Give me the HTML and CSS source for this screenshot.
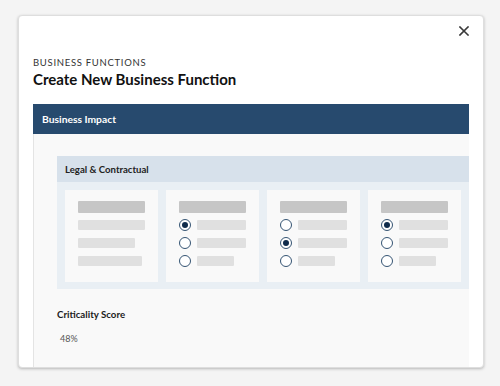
FILE: index.html
```html
<!DOCTYPE html>
<html lang="en">
<head>
<meta charset="utf-8">
<title>Create New Business Function</title>
<link rel="stylesheet" href="styles.css">
</head>
<body>
<div class="modal">
  <button class="close" aria-label="Close">
    <svg width="10" height="10" viewBox="0 0 10 10"><path d="M1 1 L9 9 M9 1 L1 9" stroke="#3a3a3a" stroke-width="1.6" stroke-linecap="square"/></svg>
  </button>
  <div class="eyebrow">BUSINESS FUNCTIONS</div>
  <h1 class="title">Create New Business Function</h1>
  <div class="bar">Business Impact</div>
  <div class="panel">
    <div class="section">
      <div class="section-head">Legal &amp; Contractual</div>
      <div class="section-body">
        <div class="opt-card">
          <div class="ph-head"></div>
          <div class="row"><span class="ph-line w67"></span></div>
          <div class="row"><span class="ph-line w57"></span></div>
          <div class="row"><span class="ph-line w64"></span></div>
        </div>
        <div class="opt-card">
          <div class="ph-head"></div>
          <div class="row"><span class="radio on"></span><span class="ph-line w50"></span></div>
          <div class="row"><span class="radio"></span><span class="ph-line w50"></span></div>
          <div class="row"><span class="radio"></span><span class="ph-line w37"></span></div>
        </div>
        <div class="opt-card">
          <div class="ph-head"></div>
          <div class="row"><span class="radio"></span><span class="ph-line w50"></span></div>
          <div class="row"><span class="radio on"></span><span class="ph-line w50"></span></div>
          <div class="row"><span class="radio"></span><span class="ph-line w37"></span></div>
        </div>
        <div class="opt-card">
          <div class="ph-head"></div>
          <div class="row"><span class="radio on"></span><span class="ph-line w50"></span></div>
          <div class="row"><span class="radio"></span><span class="ph-line w50"></span></div>
          <div class="row"><span class="radio"></span><span class="ph-line w37"></span></div>
        </div>
      </div>
    </div>
    <div class="score-label">Criticality Score</div>
    <div class="score-value">48%</div>
  </div>
</div>
</body>
</html>
```
FILE: styles.css
```css
* { box-sizing: border-box; }
html, body { margin: 0; padding: 0; }
body {
  width: 500px;
  height: 386px;
  background: #f4f4f4;
  font-family: Lato, "Open Sans", sans-serif;
  color: #1b1b1b;
  padding: 15px 0 0 18px;
  overflow: hidden;
}
.modal {
  position: relative;
  width: 466px;
  height: 353px;
  background: #fff;
  border: 1px solid #dedede;
  border-radius: 4px;
  box-shadow: 0 1px 3px rgba(0,0,0,0.25);
  padding: 40px 14px 0 14px;
  overflow: hidden;
}
.close {
  position: absolute;
  top: 9px;
  right: 13px;
  width: 12px;
  height: 12px;
  padding: 0;
  border: 0;
  background: none;
  display: flex;
  align-items: center;
  justify-content: center;
}
.eyebrow {
  font-size: 9.5px;
  line-height: 13px;
  letter-spacing: 0.7px;
  color: #333;
}
.title {
  margin: 0 0 15px;
  font-size: 15px;
  line-height: 20px;
  font-weight: 700;
  color: #111;
}
.bar {
  height: 30px;
  background: #274a6e;
  color: #fff;
  font-size: 10.3px;
  font-weight: 700;
  display: flex;
  align-items: center;
  padding-left: 9px;
}
.panel {
  height: 250px;
  background: #f9f9f9;
  border-left: 1px solid #e4e4e4;
  padding: 22px 0 0 23px;
}
.section {
  background: #e9eff4;
}
.section-head {
  height: 26px;
  background: #d7e1eb;
  font-size: 9.6px;
  font-weight: 700;
  color: #222;
  display: flex;
  align-items: center;
  padding-left: 8px;
}
.section-body {
  display: grid;
  grid-template-columns: repeat(4, 93px);
  column-gap: 8px;
  padding: 8px 7px 7px 8px;
}
.opt-card {
  height: 92px;
  background: #f9f9f9;
  padding: 11px 13px 0 13px;
  display: flex;
  flex-direction: column;
  gap: 6px;
}
.ph-head {
  width: 67px;
  height: 12px;
  background: #c6c6c6;
  border-radius: 1px;
}
.row {
  height: 12px;
  display: flex;
  align-items: center;
  gap: 6px;
}
.ph-line {
  height: 10px;
  background: #e0e0e0;
  border-radius: 1px;
}
.w67 { width: 67px; }
.w57 { width: 57px; }
.w64 { width: 64px; }
.w50 { width: 50px; }
.w37 { width: 37px; }
.radio {
  width: 12px;
  height: 12px;
  border-radius: 50%;
  border: 1.3px solid #355473;
  background: #fff;
  display: flex;
  align-items: center;
  justify-content: center;
  flex: none;
}
.radio.on::after {
  content: "";
  width: 6px;
  height: 6px;
  border-radius: 50%;
  background: #0f2b4b;
}
.score-label {
  margin-top: 18px;
  font-size: 9.7px;
  line-height: 14px;
  font-weight: 700;
  color: #1b1b1b;
}
.score-value {
  margin-top: 12px;
  padding-left: 3px;
  font-size: 9px;
  line-height: 12px;
  color: #555;
}
```
